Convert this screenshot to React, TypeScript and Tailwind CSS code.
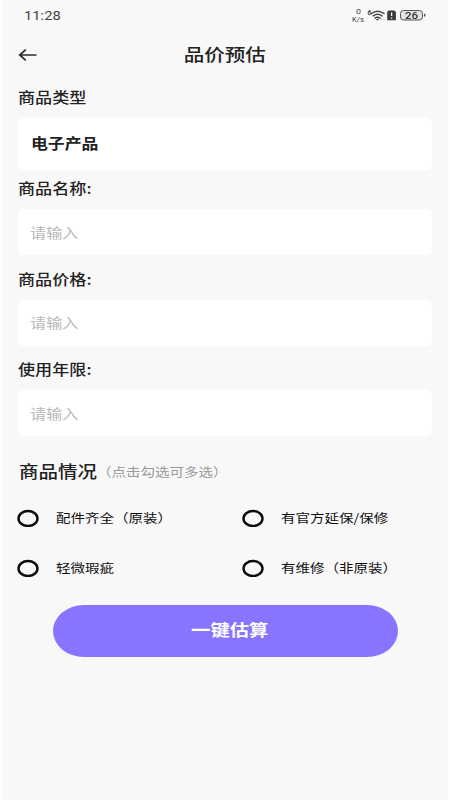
import React, { useState } from 'react';

interface WideTextProps {
  children: React.ReactNode;
  className?: string;
}

// Slightly widened lettering used across the whole screen
function WideText({ children, className = '' }: WideTextProps) {
  return (
    <span className={`inline-block origin-left scale-x-[1.18] whitespace-nowrap ${className}`}>
      {children}
    </span>
  );
}

function StatusBar() {
  return (
    <div className="flex h-[30px] items-center justify-between pl-6 pr-[24px]">
      <WideText className="pt-[2px] font-[Roboto] text-[12.5px] leading-none text-[#444]">11:28</WideText>
      <svg width="75" height="15" viewBox="0 0 75 15" fill="none">
        <g fontFamily="Roboto, sans-serif" fill="#444">
          <text x="5" y="5.5" fontSize="6.5" textLength="5" lengthAdjust="spacingAndGlyphs">0</text>
          <text x="1" y="13.5" fontSize="6.5" textLength="12" lengthAdjust="spacingAndGlyphs">K/s</text>
          <text x="16.5" y="6.5" fontSize="6.5" fontWeight="700">6</text>
        </g>
        <g stroke="#444" strokeWidth="1.5" strokeLinecap="round">
          <path d="M20.5 5.5Q26.5 0.8 33 5.5" />
          <path d="M22.3 7.9Q26.5 4.7 31 7.9" />
          <path d="M24.2 10.1Q26.5 8.3 29 10.1" />
        </g>
        <path d="M25 11.3Q26.5 10.4 28 11.3L26.5 12.8Z" fill="#444" />
        <circle cx="30.5" cy="11.5" r="0.6" fill="#aaa" />
        <circle cx="33" cy="11.5" r="0.6" fill="#aaa" />
        <path d="M37.5 2.5h5.8l1.6 1.5v8.3H36.2V3.9Z" fill="#3c3c3c" />
        <path d="M40.6 4.5v3.6M40.6 9.5v1.3" stroke="#f8f8f8" strokeWidth="1.3" />
        <rect x="49.5" y="2.5" width="22" height="9.5" rx="3" fill="#e2e2e2" stroke="#555" strokeWidth="1" />
        <path d="M73.7 5.8v2.8" stroke="#444" strokeWidth="1.3" />
        <text x="54" y="10.7" fontFamily="Roboto, sans-serif" fontSize="9.5" fontWeight="500" fill="#333" textLength="13" lengthAdjust="spacingAndGlyphs">26</text>
      </svg>
    </div>
  );
}

function Header() {
  return (
    <header className="grid h-[50px] grid-cols-3 items-center px-[18px]">
      <button type="button" aria-label="返回" className="w-5">
        <svg width="20" height="14" viewBox="0 0 20 14" fill="none" stroke="#2b2b2b" strokeWidth="1.7">
          <path d="M18.5 7H2M7.8 1.6L1.7 7l6.1 5.4" />
        </svg>
      </button>
      <h1 className="pb-[2px] text-center text-[17.4px] font-medium text-[#222]">
        <span className="inline-block scale-x-[1.18] whitespace-nowrap">品价预估</span>
      </h1>
    </header>
  );
}

interface FieldProps {
  label: string;
  value: string;
  onChange: (value: string) => void;
}

function Field({ label, value, onChange }: FieldProps) {
  return (
    <label className="block">
      <span className="flex h-[44.5px] items-center pt-[3px]">
        <WideText className="text-[14.5px] font-medium text-[#222]">{label}</WideText>
      </span>
      <span className="flex h-[46px] items-center overflow-hidden rounded-[6px] bg-white pl-[12px]">
        <input
          value={value}
          onChange={(e) => onChange(e.target.value)}
          placeholder="请输入"
          className="w-[330px] origin-left scale-x-[1.18] text-[13.7px] text-[#222] outline-none placeholder:text-[#b8b8b8]"
        />
      </span>
    </label>
  );
}

interface OptionProps {
  label: string;
  checked: boolean;
  onToggle: () => void;
}

function Option({ label, checked, onToggle }: OptionProps) {
  return (
    <button type="button" onClick={onToggle} className="flex h-[50px] items-center gap-[17px] text-left">
      <svg width="22" height="18" viewBox="0 0 22 18" className="shrink-0">
        <ellipse cx="11" cy="9.5" rx="9.5" ry="7.5" fill={checked ? '#8875ff' : 'none'} stroke="#0b0b0b" strokeWidth="2.4" />
      </svg>
      <WideText className="text-[12.3px] text-[#111]">{label}</WideText>
    </button>
  );
}

const fieldLabels = ['商品名称:', '商品价格:', '使用年限:'];
const conditions = ['配件齐全（原装）', '有官方延保/保修', '轻微瑕疵', '有维修（非原装）'];

export default function App() {
  const [values, setValues] = useState<string[]>(['', '', '']);
  const [selected, setSelected] = useState<string[]>([]);

  const updateValue = (index: number, value: string) => {
    setValues(values.map((v, i) => (i === index ? value : v)));
  };

  const toggle = (item: string) => {
    setSelected(selected.includes(item) ? selected.filter((s) => s !== item) : [...selected, item]);
  };

  return (
    <div className="h-[800px] w-[450px] overflow-hidden border-x-2 border-[#fdfdfd] bg-[#f8f8f8] font-['Noto_Sans_CJK_SC',sans-serif]">
      <div className="-mx-[2px]">
        <StatusBar />
        <Header />
        <main className="px-[18px]">
          <div className="flex h-[38px] items-center pb-[5px]">
            <WideText className="text-[14.5px] font-medium text-[#222]">商品类型</WideText>
          </div>
          <div className="flex h-[51.5px] items-center rounded-[6px] bg-white pb-[2px] pl-[12.5px]">
            <WideText className="text-[14.3px] font-bold text-[#222]">电子产品</WideText>
          </div>
          <div className="-mt-[5px]">
            {fieldLabels.map((label, index) => (
              <Field key={label} label={label} value={values[index]} onChange={(v) => updateValue(index, v)} />
            ))}
          </div>
          <div className="flex h-[57px] items-center pl-px pt-[14px]">
            <h2 className="w-[78px] text-[16.5px] font-medium text-[#222]">
              <WideText>商品情况</WideText>
            </h2>
            <WideText className="pt-px text-[12.3px] text-[#999]">（点击勾选可多选）</WideText>
          </div>
          <div className="-ml-px grid grid-cols-[225px_1fr]">
            {conditions.map((item) => (
              <Option key={item} label={item} checked={selected.includes(item)} onToggle={() => toggle(item)} />
            ))}
          </div>
          <div className="flex justify-center pt-[12px]">
            <button
              type="button"
              className="h-[51.5px] w-[345px] rounded-[31px/26px] bg-[#8875ff] pb-[3px] pl-[9px] text-[16.4px] font-bold text-white"
            >
              <span className="inline-block scale-x-[1.18]">一键估算</span>
            </button>
          </div>
        </main>
      </div>
    </div>
  );
}
